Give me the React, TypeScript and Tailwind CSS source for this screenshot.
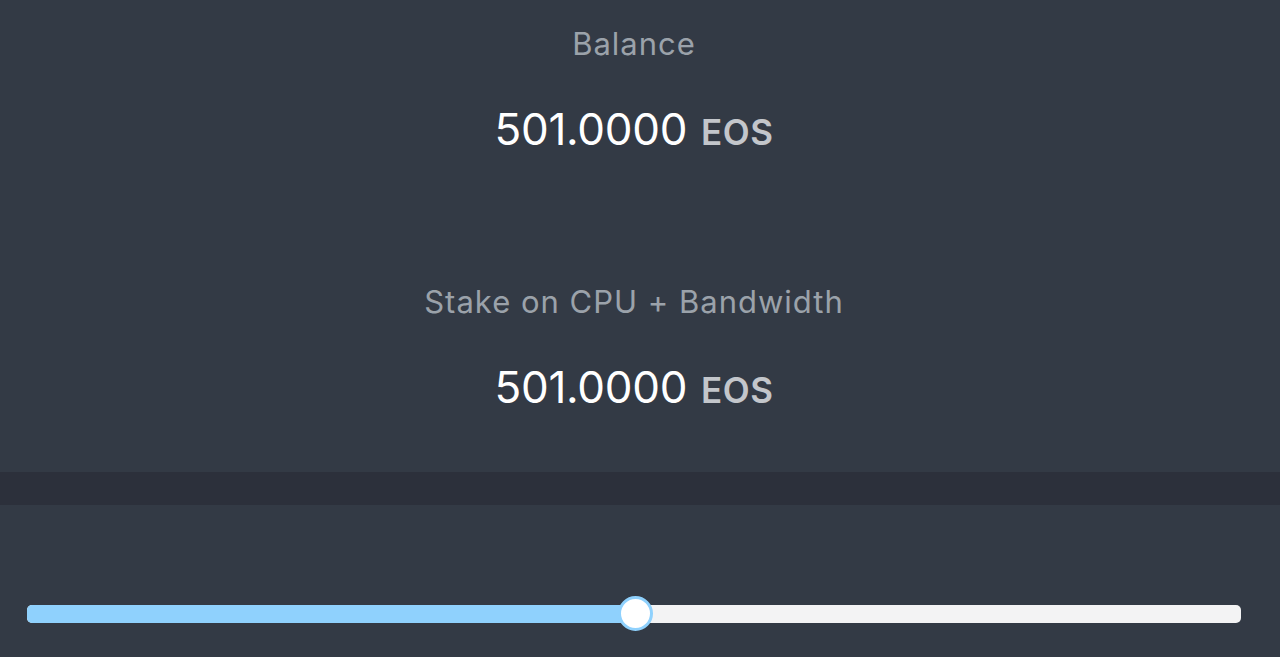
import React from "react";

function Amount() {
  return (
    <div className="flex items-baseline justify-center gap-[14px] leading-none">
      <span className="text-[44px] tracking-[-0.3px] text-white">501.0000</span>
      <span className="text-[35px] font-semibold tracking-[0.5px] text-[#c3c6cb]">EOS</span>
    </div>
  );
}

export default function App() {
  return (
    <div
      className="w-[1280px] h-[657px] bg-[#333a45] flex flex-col overflow-hidden"
      style={{ fontFamily: "Inter, 'Noto Sans', sans-serif" }}
    >
      <div className="h-[472px] flex flex-col items-center pr-[12px]">
        <div className="mt-[28px] text-[31px] tracking-[1px] leading-none text-[#9ba2aa]">Balance</div>
        <div className="mt-[48px]">
          <Amount />
        </div>
        <div className="mt-[135px] text-[31px] tracking-[1px] leading-none text-[#9ba2aa]">Stake on CPU + Bandwidth</div>
        <div className="mt-[48px]">
          <Amount />
        </div>
      </div>
      <div className="h-[33px] bg-[#2c303b]" />
      <div className="flex-1 px-[27px] pt-[100px]">
        <div className="relative h-[18px] w-[1214px] rounded-[5px] bg-[#f3f3f4]">
          <div className="h-full w-[609px] rounded-l-[5px] bg-[#8fd1fd]" />
          <div className="absolute left-[591px] top-[-9px] h-[35px] w-[35px] rounded-full border-[3px] border-[#8fd1fd] bg-white" />
        </div>
      </div>
    </div>
  );
}
